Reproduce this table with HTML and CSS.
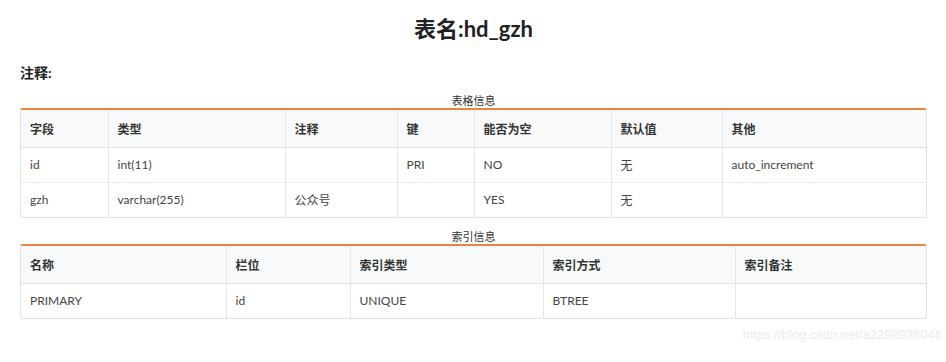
FILE: index.html
```html
<!DOCTYPE html>
<html lang="zh">
<head>
<meta charset="utf-8">
<title>表名:hd_gzh</title>
<link rel="stylesheet" href="styles.css">
</head>
<body>
<div class="page">
  <h1 class="title">表名:hd_gzh</h1>
  <h2 class="note">注释:</h2>

  <div class="caption">表格信息</div>
  <div class="box">
    <table class="grid t1">
      <colgroup>
        <col class="a1"><col class="a2"><col class="a3"><col class="a4"><col class="a5"><col class="a6"><col class="a7">
      </colgroup>
      <thead>
        <tr><th>字段</th><th>类型</th><th>注释</th><th>键</th><th>能否为空</th><th>默认值</th><th>其他</th></tr>
      </thead>
      <tbody>
        <tr><td>id</td><td>int(11)</td><td></td><td>PRI</td><td>NO</td><td>无</td><td>auto_increment</td></tr>
        <tr><td>gzh</td><td>varchar(255)</td><td>公众号</td><td></td><td>YES</td><td>无</td><td></td></tr>
      </tbody>
    </table>
  </div>

  <div class="caption second">索引信息</div>
  <div class="box">
    <table class="grid t2">
      <colgroup>
        <col class="b1"><col class="b2"><col class="b3"><col class="b4"><col class="b5">
      </colgroup>
      <thead>
        <tr><th>名称</th><th>栏位</th><th>索引类型</th><th>索引方式</th><th>索引备注</th></tr>
      </thead>
      <tbody>
        <tr><td>PRIMARY</td><td>id</td><td>UNIQUE</td><td>BTREE</td><td></td></tr>
      </tbody>
    </table>
  </div>

  <div class="watermark">https://blog.csdn.net/a2398936046</div>
</div>
</body>
</html>
```
FILE: styles.css
```css
* { box-sizing: border-box; }
html, body { margin: 0; padding: 0; background: #fff; }
body {
  font-family: Lato, "Noto Sans CJK SC", sans-serif;
  color: #333;
}
.page {
  width: 946px;
  padding: 0 19px 0 20px;
}
.title {
  margin: 14px 0 0;
  text-align: center;
  font-size: 22px;
  line-height: 30px;
  font-weight: 700;
  color: #222;
}
.note {
  margin: 19px 0 0;
  font-size: 14px;
  line-height: 20px;
  font-weight: 700;
  color: #222;
}
.caption {
  margin-top: 11px;
  text-align: center;
  font-size: 11px;
  line-height: 14px;
  color: #333;
}
.caption.second { margin-top: 12px; }
.box {
  border: 1px solid #e3e3e3;
  border-top: 2px solid #f1843d;
  border-radius: 3px;
  overflow: hidden;
}
.grid {
  width: 100%;
  border-collapse: collapse;
  table-layout: fixed;
  font-size: 12px;
}
.grid th, .grid td {
  text-align: left;
  padding: 0 9px;
  border-left: 1px solid #e6e6e6;
  white-space: nowrap;
}
.grid th:first-child, .grid td:first-child { border-left: none; }
.grid th {
  height: 37px;
  background: #f8f9fa;
  font-weight: 700;
  color: #333;
  border-bottom: 1px solid #e3e3e3;
}
.grid td {
  height: 35px;
  color: #444;
  border-top: 1px solid #ebebeb;
}
.grid tbody tr:first-child td { border-top: none; }
.a1 { width: 87px; }
.a2 { width: 177px; }
.a3 { width: 112px; }
.a4 { width: 77px; }
.a5 { width: 137px; }
.a6 { width: 111px; }
.a7 { width: auto; }
.b1 { width: 205px; }
.b2 { width: 124px; }
.b3 { width: 193px; }
.b4 { width: 192px; }
.b5 { width: auto; }
.watermark {
  margin: 8px -15px 0 0;
  text-align: right;
  font-family: "Liberation Sans", Arial, sans-serif;
  font-size: 13px;
  line-height: 16px;
  color: #ebebeb;
}
```
